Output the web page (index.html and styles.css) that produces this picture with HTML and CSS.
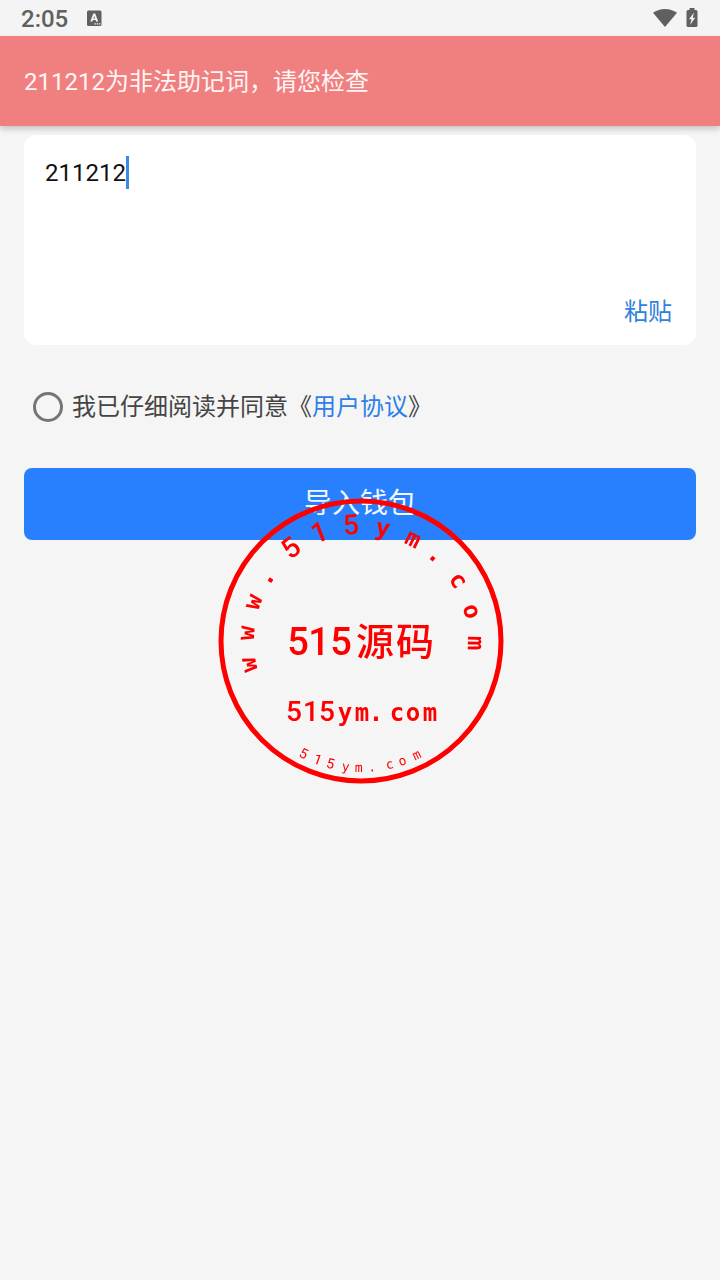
FILE: index.html
```html
<!DOCTYPE html>
<html lang="zh-CN">
<head>
<meta charset="utf-8">
<meta name="viewport" content="width=device-width, initial-scale=1">
<title>导入钱包</title>
<link rel="stylesheet" href="styles.css">
</head>
<body>
<header class="status-bar">
  <span class="clock">2:05</span>
  <svg class="ime-icon" width="16" height="17" viewBox="0 0 16 17" aria-hidden="true">
    <rect x="1" y="0.500" width="14.500" height="15.500" rx="1.500" fill="#606060"/>
    <path d="M4.300 11.500 7.300 3.500h1.900l3 8h-2.100l-.5-1.500H6.900l-.5 1.500zM7.400 8.400h1.700l-.85-2.500z" fill="#f4f4f4"/>
    <path d="M8.500 13.200h1.400v1.300H8.500zM10.700 13.200h1.400v1.300h-1.400zM12.900 13.200h1.400v1.300h-1.400z" fill="#f4f4f4"/>
  </svg>
  <div class="status-icons">
    <svg width="24" height="19" viewBox="0 0 24 19" aria-hidden="true">
      <path d="M12 18 0 3.800C3.500 1.300 7.600 0 12 0s8.500 1.300 12 3.800z" fill="#606060"/>
    </svg>
    <svg width="12" height="20" viewBox="0 0 12 20" aria-hidden="true">
      <path d="M3.500 0h5v2H10a1.500 1.500 0 0 1 1.500 1.500v14A1.500 1.500 0 0 1 10 19H2a1.500 1.500 0 0 1-1.500-1.500v-14A1.500 1.500 0 0 1 2 2h1.500z" fill="#606060"/>
      <path d="M8 4.500 3 11.300h2.600L4 17l5.200-7.200H6.600z" fill="#f4f4f4"/>
    </svg>
  </div>
</header>
<div class="alert" role="alert">211212为非法助记词，请您检查</div>
<main class="content">
  <section class="phrase-card">
    <div class="phrase-field">
      <textarea class="phrase-input" aria-label="助记词" spellcheck="false">211212</textarea>
      <span class="caret"></span>
    </div>
    <button class="paste" type="button">粘贴</button>
  </section>
  <div class="agreement">
    <input class="agree-radio" type="radio" id="agree">
    <span><label for="agree">我已仔细阅读并同意</label>《<a class="link" href="#terms">用户协议</a>》</span>
  </div>
  <button class="submit" type="button">导入钱包</button>
</main>
<div class="stamp">
  <svg width="286" height="286" viewBox="-143 -143 286 286" role="img" aria-label="515源码">
    <circle r="140" fill="none" stroke="#f00" stroke-width="5"/>
    <g class="arc-top">
      <text y="-107" transform="rotate(-102)">w</text>
      <text y="-107" transform="rotate(-86)">w</text>
      <text y="-107" transform="rotate(-70)">w</text>
      <text y="-107" transform="rotate(-56)">.</text>
      <text class="digit" y="-107" transform="rotate(-37)">5</text>
      <text class="digit" y="-107" transform="rotate(-21)">1</text>
      <text class="digit" y="-107" transform="rotate(-5)">5</text>
      <text y="-107" transform="rotate(11)">y</text>
      <text y="-107" transform="rotate(27)">m</text>
      <text y="-107" transform="rotate(41)">.</text>
      <text y="-107" transform="rotate(58)">c</text>
      <text y="-107" transform="rotate(75)">o</text>
      <text y="-107" transform="rotate(91)">m</text>
    </g>
    <text class="stamp-name" y="14"><tspan x="-63 -42 -20">515</tspan><tspan class="stamp-cjk" x="14 54">源码</tspan></text>
    <text class="stamp-site" y="80"><tspan class="digit" x="-67 -50 -34">515</tspan><tspan x="-16 1 15 36 52 69">ym.com</tspan></text>
    <g class="arc-bottom">
      <text class="digit" y="131" transform="rotate(27)">5</text>
      <text class="digit" y="131" transform="rotate(20)">1</text>
      <text class="digit" y="131" transform="rotate(14)">5</text>
      <text y="131" transform="rotate(7)">y</text>
      <text y="131" transform="rotate(1)">m</text>
      <text y="131" transform="rotate(-5)">.</text>
      <text y="131" transform="rotate(-13)">c</text>
      <text y="131" transform="rotate(-19)">o</text>
      <text y="131" transform="rotate(-26)">m</text>
    </g>
  </svg>
</div>
</body>
</html>
```
FILE: styles.css
```css
* {
  box-sizing: border-box;
}

body {
  margin: 0;
  min-height: 100vh;
  background: #f5f5f5;
  color: #444;
  font-family: Roboto, "Noto Sans CJK SC", sans-serif;
  font-size: 24px;
  line-height: 36px;
}

button,
textarea {
  font: inherit;
  border: 0;
  padding: 0;
  background: none;
}

.status-bar {
  display: flex;
  align-items: center;
  height: 36px;
  padding: 0 22px 0 21px;
  background: #f4f4f4;
  color: #606060;
}

.clock {
  font-weight: 500;
  padding-top: 2px;
}

.ime-icon {
  margin-left: 18px;
}

.status-icons {
  display: flex;
  align-items: center;
  gap: 9px;
  margin-left: auto;
}

.alert {
  padding: 28px 24px 26px;
  background: #f08080;
  color: #fff5f5;
  box-shadow: 0 3px 6px rgba(0, 0, 0, 0.2);
}

.content {
  display: flex;
  flex-direction: column;
  padding: 9px 24px 24px;
}

.phrase-card {
  display: flex;
  flex-direction: column;
  padding: 20px 24px 15px 21px;
  border-radius: 12px;
  background: #fff;
}

.phrase-field {
  position: relative;
  display: flex;
}

.phrase-input {
  flex: 1;
  height: 139px;
  resize: none;
  outline: none;
  color: #111;
}

.caret {
  position: absolute;
  left: 81px;
  top: 1px;
  width: 3px;
  height: 33px;
  background: #3b8ae0;
}

.paste {
  align-self: flex-end;
  color: #3182d9;
}

.agreement {
  display: flex;
  align-items: center;
  gap: 9px;
  padding: 44px 9px 43px;
}

.agree-radio {
  appearance: none;
  width: 30px;
  height: 30px;
  margin: 0;
  border: 3px solid #757575;
  border-radius: 50%;
}

.link {
  color: #2e80e8;
  text-decoration: none;
}

.submit {
  height: 72px;
  border-radius: 8px;
  background: #2880ff;
  color: #f0f8ff;
  font-size: 28px;
}

.stamp {
  position: fixed;
  inset: 1px 0 0 1px;
  display: flex;
  align-items: center;
  justify-content: center;
  pointer-events: none;
}

.stamp text {
  fill: #f00;
  text-anchor: middle;
  font-family: "DejaVu Sans Mono", monospace;
}

.stamp .arc-top text,
.stamp .stamp-site {
  font-size: 24px;
  font-weight: 700;
}

.stamp .arc-top .digit,
.stamp .stamp-site .digit {
  font-family: Roboto, sans-serif;
  font-size: 28px;
  font-weight: 500;
}

.stamp .stamp-name {
  font-family: Roboto, sans-serif;
  font-size: 38px;
  font-weight: 500;
}

.stamp .stamp-cjk {
  font-family: "Noto Sans CJK SC", sans-serif;
  font-size: 38px;
}

.stamp .arc-bottom text {
  font-size: 13px;
}

.stamp .arc-bottom .digit {
  font-family: Roboto, sans-serif;
  font-size: 14px;
}
```
